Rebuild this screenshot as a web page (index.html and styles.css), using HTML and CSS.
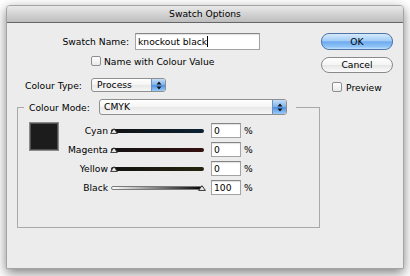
FILE: index.html
```html
<!DOCTYPE html>
<html lang="en">
<head>
    <meta charset="UTF-8">
    <title>Swatch Options</title>
    <link rel="stylesheet" href="styles.css">
</head>
<body>

<div class="dialog">
    <div class="titlebar">Swatch Options</div>

    <div class="content">
        <div class="main">
            <!-- Swatch name -->
            <div class="name-row">
                <span class="name-label">Swatch Name:</span>
                <div class="field name-field">knockout black<span class="caret"></span></div>
            </div>
            <div class="check-row name-check"><span class="checkbox"></span>Name with Colour Value</div>

            <!-- Colour type -->
            <div class="type-row">
                <span class="type-label">Colour Type:</span>
                <div class="popup type-popup">
                    <span class="popup-text">Process</span>
                    <span class="popup-arrows">
                        <svg width="6" height="9" viewBox="0 0 6 9"><path d="M3 0.5 L5.5 3.5 H0.5Z M3 8.5 L5.5 5.5 H0.5Z" fill="#111"/></svg>
                    </span>
                </div>
            </div>

            <!-- Colour mode group -->
            <fieldset class="mode-group">
                <legend class="mode-legend">
                    <span class="mode-label">Colour Mode:</span>
                    <div class="popup mode-popup">
                        <span class="popup-text">CMYK</span>
                        <span class="popup-arrows">
                            <svg width="6" height="9" viewBox="0 0 6 9"><path d="M3 0.5 L5.5 3.5 H0.5Z M3 8.5 L5.5 5.5 H0.5Z" fill="#111"/></svg>
                        </span>
                    </div>
                </legend>
                <div class="mode-body">
                    <div class="swatch"></div>
                    <div class="sliders">
                        <span class="slider-label">Cyan</span>
                        <div class="slider">
                            <div class="track track-cyan"></div>
                            <svg class="thumb" width="8" height="6" viewBox="0 0 8 6"><path d="M4 .7 L7.4 5.4 H.6 Z" fill="#f2f2f2" stroke="#333"/></svg>
                        </div>
                        <div class="field pct-field">0</div>
                        <span class="pct">%</span>

                        <span class="slider-label">Magenta</span>
                        <div class="slider">
                            <div class="track track-magenta"></div>
                            <svg class="thumb" width="8" height="6" viewBox="0 0 8 6"><path d="M4 .7 L7.4 5.4 H.6 Z" fill="#f2f2f2" stroke="#333"/></svg>
                        </div>
                        <div class="field pct-field">0</div>
                        <span class="pct">%</span>

                        <span class="slider-label">Yellow</span>
                        <div class="slider">
                            <div class="track track-yellow"></div>
                            <svg class="thumb" width="8" height="6" viewBox="0 0 8 6"><path d="M4 .7 L7.4 5.4 H.6 Z" fill="#f2f2f2" stroke="#333"/></svg>
                        </div>
                        <div class="field pct-field">0</div>
                        <span class="pct">%</span>

                        <span class="slider-label">Black</span>
                        <div class="slider">
                            <div class="track track-black"></div>
                            <svg class="thumb thumb-end" width="8" height="6" viewBox="0 0 8 6"><path d="M4 .7 L7.4 5.4 H.6 Z" fill="#f2f2f2" stroke="#333"/></svg>
                        </div>
                        <div class="field pct-field">100</div>
                        <span class="pct">%</span>
                    </div>
                </div>
            </fieldset>
        </div>

        <!-- Buttons -->
        <div class="side">
            <button class="btn btn-ok">OK</button>
            <button class="btn btn-cancel">Cancel</button>
            <div class="check-row preview"><span class="checkbox"></span>Preview</div>
        </div>
    </div>
</div>

</body>
</html>
```

FILE: styles.css
```css
* {
    box-sizing: border-box;
}
body {
    margin: 0;
    width: 410px;
    height: 276px;
    overflow: hidden;
    background-color: #ffffff;
    font-family: "DejaVu Sans", sans-serif;
    font-size: 9.2px;
    color: #000;
}
.dialog {
    margin: 5px 6px 0;
    width: 398px;
    height: 264px;
    background-color: #ececec;
    border: 1px solid #a4a4a4;
    border-radius: 4px 4px 0 0;
    box-shadow: 0 4px 12px rgba(0, 0, 0, 0.5);
}
.titlebar {
    height: 17px;
    line-height: 16px;
    text-align: center;
    background: linear-gradient(#e9e9e9, #bdbdbd);
    border-bottom: 1px solid #666;
    border-radius: 3px 3px 0 0;
}
.content {
    display: flex;
    padding-top: 10px;
}
.main {
    width: 314px;
}
.side {
    width: 72px;
}

/* text fields */
.field {
    background-color: #fff;
    border: 1px solid #a3a3a3;
    border-top-color: #858585;
    box-shadow: inset 0 1px 1px rgba(0, 0, 0, 0.12);
    padding-left: 2px;
}
.caret {
    display: inline-block;
    width: 1px;
    height: 11px;
    background-color: #000;
    vertical-align: -2px;
}
.name-row {
    display: flex;
    align-items: center;
    height: 17px;
}
.name-label {
    width: 122px;
    margin-right: 6px;
    text-align: right;
}
.name-field {
    width: 125px;
    height: 17px;
    line-height: 15px;
}

/* checkboxes */
.check-row {
    display: flex;
    align-items: center;
    height: 12px;
}
.checkbox {
    width: 10px;
    height: 10px;
    margin-right: 3px;
    border: 1px solid #8e8e8e;
    border-radius: 2px;
    background: linear-gradient(#ffffff, #e9e9e9);
}
.name-check {
    margin-top: 5px;
    padding-left: 84px;
}
.preview {
    margin-top: 8px;
    padding-left: 11px;
}
.preview .checkbox {
    margin-right: 4px;
}

/* popup menus */
.type-row {
    display: flex;
    align-items: center;
    margin-top: 11px;
    padding-left: 18px;
    height: 14px;
}
.type-label {
    width: 66px;
}
.popup {
    display: flex;
    border: 1px solid #8f8f8f;
    border-radius: 3px;
    overflow: hidden;
    background: linear-gradient(#ffffff, #f4f4f4 50%, #e8e8e8 51%, #f6f6f6);
}
.popup-text {
    flex: 1;
    line-height: 12px;
}
.popup-arrows {
    display: flex;
    align-items: center;
    justify-content: center;
    width: 14px;
    border-left: 1px solid #6f8fbb;
    background: linear-gradient(#c3ddf8, #7db3ee 50%, #4e8fe2 51%, #9acbf7);
}
.type-popup {
    width: 75px;
    height: 14px;
}
.type-popup .popup-text {
    padding-left: 5px;
}

/* colour mode group */
.mode-group {
    margin: 7px 0 0 10px;
    padding: 0;
    width: 303px;
    height: 129px;
    min-inline-size: 0;
    border: 1px solid #a9a9a9;
}
.mode-legend {
    display: flex;
    align-items: center;
    height: 16px;
    margin-left: 6px;
    padding: 0 9px 0 5px;
}
.mode-label {
    width: 70px;
}
.mode-popup {
    width: 188px;
    height: 16px;
}
.mode-popup .popup-text {
    padding-left: 4px;
    line-height: 14px;
}
.mode-body {
    display: flex;
    padding: 7px 0 0 11px;
}
.swatch {
    width: 30px;
    height: 29px;
    border: 1px solid #8a8a8a;
    background-color: #1c1c1c;
    box-shadow: inset 0 0 0 1px #505050;
}
.sliders {
    display: grid;
    grid-template-columns: 49px 103px 30px auto;
    grid-auto-rows: 19px;
    align-items: center;
    margin-top: -1px;
}
.slider-label {
    text-align: right;
}
.slider {
    position: relative;
    display: flex;
    align-items: center;
    height: 11px;
    margin: 0 7px 0 3px;
}
.track {
    flex: 1;
    height: 4px;
    border-radius: 2px;
}
.track-cyan {
    background: linear-gradient(to right, #121212, #0b2234);
}
.track-magenta {
    background: linear-gradient(to right, #121212, #34100f);
}
.track-yellow {
    background: linear-gradient(to right, #121212, #25250e);
}
.track-black {
    border: 1px solid #7a7a7a;
    background: linear-gradient(to right, #ffffff, #000000);
}
.thumb {
    position: absolute;
    left: -1px;
    top: 3px;
}
.thumb-end {
    left: auto;
    right: -2px;
}
.pct-field {
    height: 15px;
    line-height: 13px;
}
.pct {
    padding-left: 3px;
}

/* buttons */
.btn {
    display: block;
    width: 72px;
    height: 16px;
    padding: 0;
    font: inherit;
    color: #000;
    text-align: center;
    line-height: 14px;
    border: 1px solid #8a8a8a;
    border-radius: 8px;
    background: linear-gradient(#ffffff, #f4f4f4 50%, #e6e6e6 51%, #fafafa);
}
.btn-ok {
    height: 17px;
    line-height: 15px;
    border-color: #4f74a8;
    background: linear-gradient(#d6eafc, #a3cdf6 45%, #6eaaef 52%, #8fc4f6 85%, #c6e4fc);
}
.btn-cancel {
    margin-top: 7px;
}
```
